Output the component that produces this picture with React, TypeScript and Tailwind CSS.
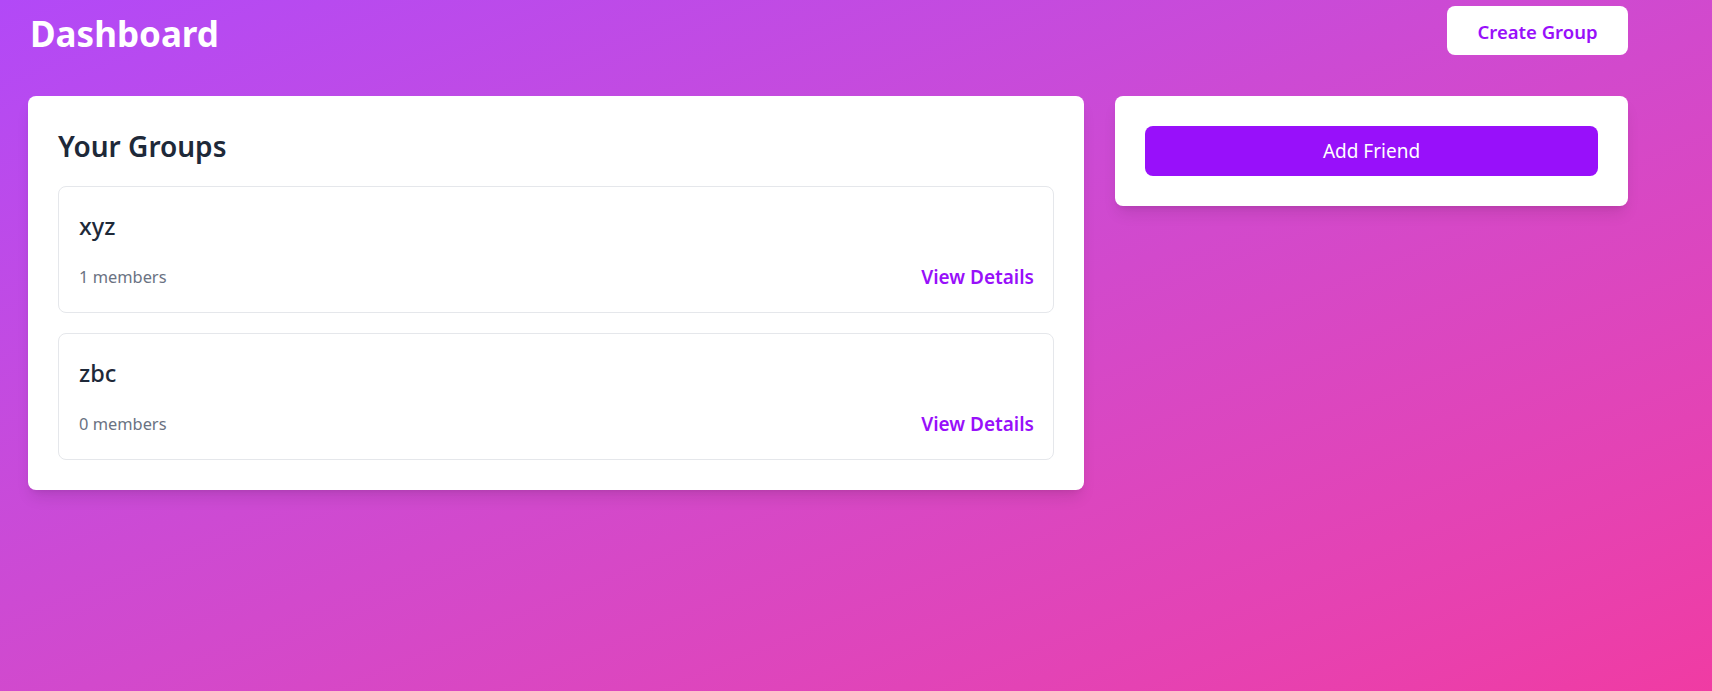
import React from 'react';

interface Group {
    id: number;
    name: string;
    members: number;
}

const groups: Group[] = [
    { id: 1, name: 'xyz', members: 1 },
    { id: 2, name: 'zbc', members: 0 },
];

const GroupItem: React.FC<{ group: Group }> = ({ group }) => (
    <div className="border border-[#e5e7eb] rounded-lg px-[20px] pt-[20px] pb-[21px]">
        <h3 className="text-[23.5px] leading-[38px] font-medium text-[#1e2939]">{group.name}</h3>
        <div className="mt-[18px] h-[28px] flex items-center justify-between">
            <span className="text-[16.4px] leading-[24px] text-[#6a7282]">{group.members} members</span>
            <button className="text-[19px] leading-[28px] font-semibold text-[#9810fa] mr-[-1px]">View Details</button>
        </div>
    </div>
);

const App: React.FC = () => {
    return (
        <div
            className="min-h-screen bg-linear-to-br from-[#b249f7] to-[#f03ba3] px-[28px] pt-[6px]"
            style={{ fontFamily: '"Noto Sans", "Open Sans", sans-serif' }}
        >
            <div className="w-[1600px]">
                <header className="h-[49px] flex items-center justify-between">
                    <h1 className="text-[35px] leading-[35px] mt-[6px] ml-[2px] font-bold text-white">Dashboard</h1>
                    <button className="w-[181px] h-[49px] pt-[2px] bg-white rounded-lg text-[18.5px] font-semibold text-[#9810fa]">Create Group</button>
                </header>

                <div className="mt-[41px] grid grid-cols-[1056px_513px] gap-[31px] items-start">
                    <div className="bg-white rounded-lg shadow-lg p-[30px]">
                        <h2 className="text-[28px] leading-[40px] font-semibold text-[#1e2939] mb-[20px]">Your Groups</h2>
                        <div className="flex flex-col gap-[20px]">
                            {groups.map(g => <GroupItem key={g.id} group={g} />)}
                        </div>
                    </div>

                    <div className="bg-white rounded-lg shadow-lg p-[30px]">
                        <button className="w-full h-[50px] bg-[#9810fa] rounded-lg text-white text-[19px]">Add Friend</button>
                    </div>
                </div>
            </div>
        </div>
    );
};

export default App;
